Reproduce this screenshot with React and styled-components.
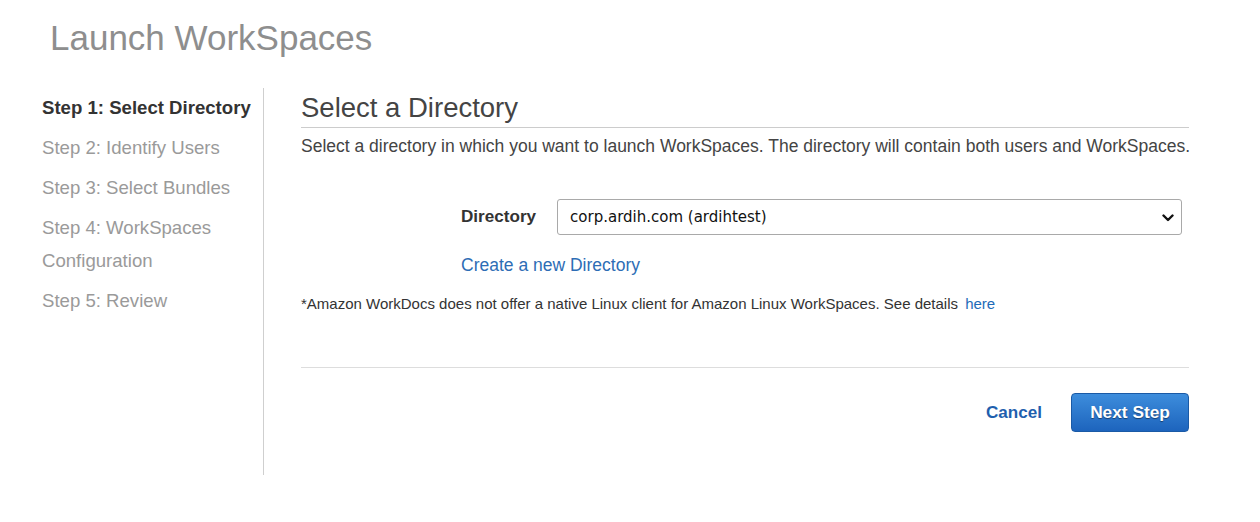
import React from 'react'
import styled, { createGlobalStyle } from 'styled-components'

const GlobalStyle = createGlobalStyle`
  body {
    margin: 0;
    background: #fff;
    font-family: "Liberation Sans", Arial, sans-serif;
  }
`

const steps = [
  'Step 1: Select Directory',
  'Step 2: Identify Users',
  'Step 3: Select Bundles',
  'Step 4: WorkSpaces Configuration',
  'Step 5: Review',
]

const App = () => {
  return (
    <Page>
      <GlobalStyle />
      <Title>Launch WorkSpaces</Title>
      <Layout>
        <Sidebar>
          {steps.map((s, i) => (
            <StepItem key={s} active={i === 0}>{s}</StepItem>
          ))}
        </Sidebar>
        <Main>
          <Heading>Select a Directory</Heading>
          <Description>
            Select a directory in which you want to launch WorkSpaces. The directory will contain both users and WorkSpaces.
          </Description>
          <FieldRow>
            <Label>Directory</Label>
            <SelectWrap>
              <Select defaultValue="corp">
                <option value="corp">corp.ardih.com (ardihtest)</option>
              </Select>
              <Chevron width="12" height="8" viewBox="0 0 12 8">
                <path d="M1.5 1.5 L6 6 L10.5 1.5" fill="none" stroke="#111" strokeWidth="2.4" strokeLinecap="round" strokeLinejoin="round" />
              </Chevron>
            </SelectWrap>
          </FieldRow>
          <CreateLink href="#">Create a new Directory</CreateLink>
          <Note>
            *Amazon WorkDocs does not offer a native Linux client for Amazon Linux WorkSpaces. See details <NoteLink href="#">here</NoteLink>
          </Note>
          <Divider />
          <Actions>
            <CancelButton>Cancel</CancelButton>
            <NextButton>Next Step</NextButton>
          </Actions>
        </Main>
      </Layout>
    </Page>
  )
}

const Page = styled.div`
  padding-top: 18px;
  width: 1260px;
`

const Title = styled.h1`
  margin: 0 0 30px 50px;
  font-size: 35px;
  line-height: 40px;
  font-weight: 400;
  color: #8e8e8e;
`

const Layout = styled.div`
  display: flex;
  margin-left: 42px;
`

const Sidebar = styled.ul`
  list-style: none;
  margin: 0;
  padding: 3px 0 0;
  width: 221px;
  height: 384px;
  border-right: 1px solid #cfcfcf;
`

const StepItem = styled.li`
  font-size: 18.6px;
  line-height: 33px;
  margin-bottom: 7px;
  width: 213px;
  color: ${({ active }) => (active ? '#333' : '#9a9a9a')};
  font-weight: ${({ active }) => (active ? 700 : 400)};
`

const Main = styled.div`
  width: 888px;
  padding-left: 37px;
`

const Heading = styled.h2`
  margin: 0;
  padding: 4px 0 3px;
  font-size: 27.5px;
  line-height: 32px;
  font-weight: 400;
  color: #444;
  border-bottom: 1px solid #cccccc;
`

const Description = styled.p`
  margin: 6px 0 0;
  font-size: 17.5px;
  line-height: 24px;
  color: #444;
  white-space: nowrap;
`

const FieldRow = styled.div`
  display: flex;
  align-items: center;
  gap: 21px;
  margin-top: 41px;
  padding-left: 160px;
`

const Label = styled.label`
  font-size: 17.1px;
  font-weight: 700;
  color: #333;
`

const SelectWrap = styled.div`
  position: relative;
  width: 625px;
`

const Select = styled.select`
  appearance: none;
  width: 100%;
  height: 36px;
  padding: 0 30px 0 12px;
  border: 1px solid #a9a9a9;
  border-radius: 3px;
  background: #fff;
  font-family: "DejaVu Sans", sans-serif;
  font-size: 15px;
  color: #111;
`

const Chevron = styled.svg`
  position: absolute;
  right: 8px;
  top: 15px;
  pointer-events: none;
`

const CreateLink = styled.a`
  display: block;
  margin: 18px 0 0 160px;
  font-size: 17.5px;
  line-height: 24px;
  color: #2d6db5;
  text-decoration: none;
`

const Note = styled.p`
  margin: 17px 0 0;
  font-size: 15px;
  line-height: 20px;
  color: #333;
  white-space: nowrap;
`

const NoteLink = styled.a`
  margin-left: 3px;
  color: #1e6bb8;
  text-decoration: none;
`

const Divider = styled.hr`
  margin: 53px 0 0;
  border: 0;
  border-top: 1px solid #dddddd;
`

const Actions = styled.div`
  display: flex;
  justify-content: flex-end;
  align-items: center;
  gap: 29px;
  margin-top: 25px;
`

const CancelButton = styled.button`
  background: none;
  border: 0;
  padding: 0;
  font-family: inherit;
  font-size: 17.1px;
  font-weight: 700;
  color: #1f5fae;
  cursor: pointer;
`

const NextButton = styled.button`
  height: 39px;
  width: 118px;
  border: 1px solid #1a5aa6;
  border-radius: 4px;
  background: linear-gradient(#3d8ddc, #1d64bd);
  color: #fff;
  font-family: inherit;
  font-size: 17.3px;
  font-weight: 700;
  text-shadow: 0 1px 1px rgba(0, 0, 0, 0.45);
  cursor: pointer;
`

export default App
